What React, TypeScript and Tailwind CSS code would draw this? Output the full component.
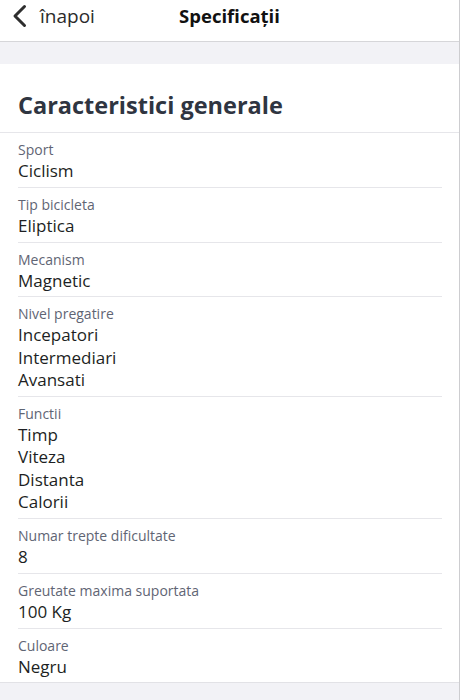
const specs = [
  { label: "Sport", values: ["Ciclism"] },
  { label: "Tip bicicleta", values: ["Eliptica"] },
  { label: "Mecanism", values: ["Magnetic"] },
  { label: "Nivel pregatire", values: ["Incepatori", "Intermediari", "Avansati"] },
  { label: "Functii", values: ["Timp", "Viteza", "Distanta", "Calorii"] },
  { label: "Numar trepte dificultate", values: ["8"] },
  { label: "Greutate maxima suportata", values: ["100 Kg"] },
  { label: "Culoare", values: ["Negru"] },
]

export default function App() {
  return (
    <div className="min-h-[700px] w-[460px] border-r border-[#cdcdd0] bg-[#f2f2f6] font-['Open_Sans',sans-serif]">
      {/* Top bar */}
      <header className="relative h-[42px] border-b border-[#d6d6d9] bg-white">
        <div className="flex h-[33px] items-center pl-[12px] text-[#2b2b2b]">
          <svg width="15" height="24" viewBox="0 0 15 24" fill="none" className="mb-[1px]">
            <path d="M12.5 2.5L3 12l9.5 9.5" stroke="#2e2e2e" strokeWidth="3" strokeLinecap="round" strokeLinejoin="round" />
          </svg>
          <span className="ml-[13px] text-[19px] leading-none">înapoi</span>
        </div>
        <h1 className="absolute left-0 right-0 top-[6px] text-center text-[18.5px] font-bold leading-[20px] text-[#111]">
          Specificații
        </h1>
      </header>

      <div className="h-[22px]" />

      {/* Card */}
      <section className="bg-white">
        <h2 className="border-b border-[#e6e6ea] px-[18px] pb-[11px] pt-[25px] text-[23.5px] font-bold leading-[32px] text-[#2f3541]">
          Caracteristici generale
        </h2>
        <div className="ml-[18px] mr-[17px]">
          {specs.map((spec, i) => (
            <div
              key={spec.label}
              className={
                i < specs.length - 1
                  ? "border-b border-[#e6e6ea] pb-[4.4px] pt-[7px]"
                  : "pb-[4px] pt-[7px]"
              }
            >
              <div className="text-[14px] font-medium leading-[20px] text-[#5f6574]">{spec.label}</div>
              {spec.values.map((v) => (
                <div key={v} className="text-[17px] font-medium leading-[22.4px] text-[#1d1f23]">
                  {v}
                </div>
              ))}
            </div>
          ))}
        </div>
      </section>
      <div className="border-t border-[#e2e2e6]" />
    </div>
  )
}
